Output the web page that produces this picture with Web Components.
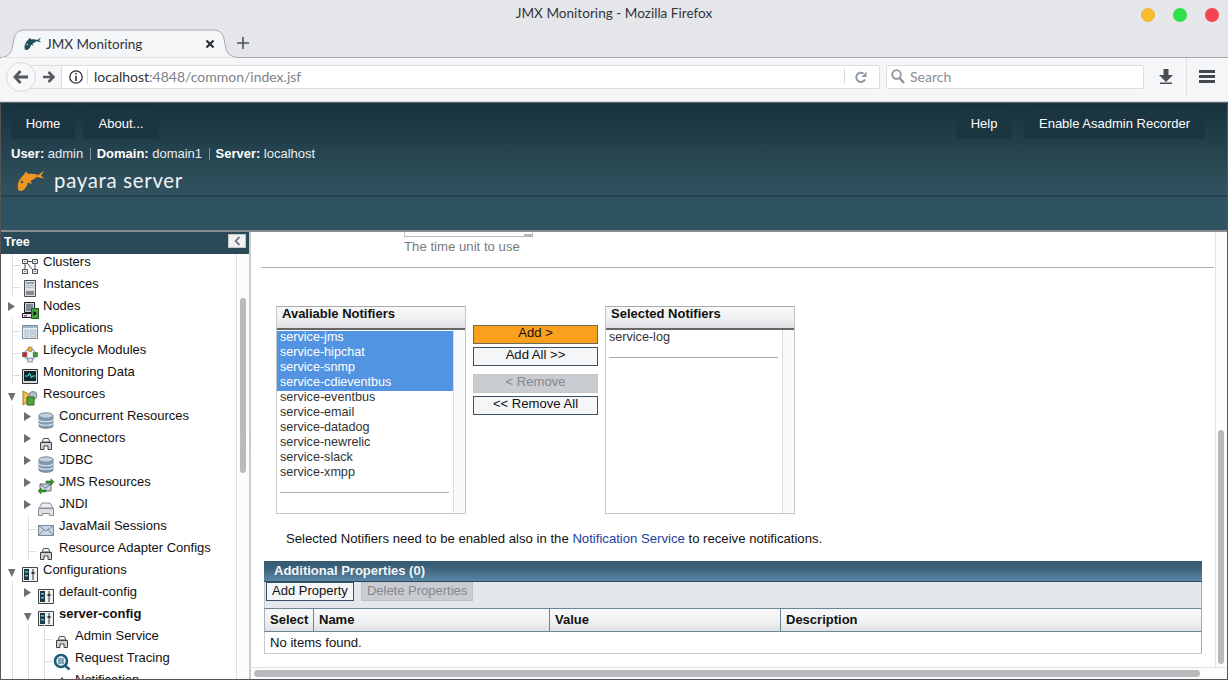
<!DOCTYPE html>
<html><head><meta charset="utf-8"><title>JMX Monitoring</title>
<style>
html,body{margin:0;padding:0;width:1228px;height:680px;overflow:hidden;background:#fff}
body{font-family:"Liberation Sans",Arial,sans-serif;font-size:13px;color:#111}
</style></head><body>
<firefox-chrome></firefox-chrome>
<payara-app>
  <admin-header slot="header"></admin-header>
  <tree-panel slot="tree">
    <tree-node first level="1" icon="clusters" guides="11" label="Clusters"></tree-node>
    <tree-node level="1" icon="instance" guides="11" label="Instances"></tree-node>
    <tree-node level="1" icon="nodes" exp="r" label="Nodes"></tree-node>
    <tree-node level="1" icon="app" guides="11" label="Applications"></tree-node>
    <tree-node level="1" icon="lifecycle" guides="11" label="Lifecycle Modules"></tree-node>
    <tree-node level="1" icon="monitor" guides="11" label="Monitoring Data"></tree-node>
    <tree-node level="1" icon="resources" exp="d" label="Resources"></tree-node>
    <tree-node level="2" icon="db" exp="r" guides="11" label="Concurrent Resources"></tree-node>
    <tree-node level="2" icon="connector" exp="r" guides="11" label="Connectors"></tree-node>
    <tree-node level="2" icon="db" exp="r" guides="11" label="JDBC"></tree-node>
    <tree-node level="2" icon="jms" exp="r" guides="11" label="JMS Resources"></tree-node>
    <tree-node level="2" icon="jndi" exp="r" guides="11" label="JNDI"></tree-node>
    <tree-node level="2" icon="mail" guides="11,27" label="JavaMail Sessions"></tree-node>
    <tree-node level="2" icon="connector" guides="11,27" label="Resource Adapter Configs"></tree-node>
    <tree-node level="1" icon="config" exp="d" label="Configurations"></tree-node>
    <tree-node level="2" icon="config" exp="r" guides="11" label="default-config"></tree-node>
    <tree-node level="2" icon="config" exp="d" bold guides="11" label="server-config"></tree-node>
    <tree-node level="3" icon="connector" guides="11,27,43" label="Admin Service"></tree-node>
    <tree-node level="3" icon="tracing" guides="11,27,43" label="Request Tracing"></tree-node>
    <tree-node level="3" icon="notify" guides="11,27,43" label="Notification"></tree-node>
  </tree-panel>
  <main-panel slot="main">
    <notifier-picker></notifier-picker>
    <p class="note">Selected Notifiers need to be enabled also in the <a>Notification Service</a> to receive notifications.</p>
    <props-table></props-table>
  </main-panel>
</payara-app>
<script>
const FISH='M1.500 20.500C.5 17 .5 13 2.500 10C4 7 7 5 9 1.500L11.500 4C15 3.500 18 4 21 5L27 .8L24 5.800L27.500 8.500L19.700 7C18 8.500 16 10 13.500 10.800L15 14L11 12.500C10.500 16 8 19.500 5 21Z';
class FirefoxChrome extends HTMLElement{constructor(){super();this.attachShadow({mode:'open'}).innerHTML=`<style>
:host{display:block;height:102px;background:#e5e6ea;font-family:Lato,"Open Sans",sans-serif;color:#2f3338}
.title{height:29px;box-sizing:border-box;display:flex;align-items:center;justify-content:center;padding-bottom:4px;font-size:13.6px;position:relative;color:#32363b}
.lights{position:absolute;right:0;top:0;height:29px;display:flex;gap:18px;padding:0 9px 0 0;align-items:center;box-sizing:border-box}
.lights i{width:14px;height:14px;border-radius:50%;display:block}
.tabs{height:29px;box-sizing:border-box;border-bottom:1px solid #a9aaad;display:flex;align-items:flex-end;padding-left:14px;position:relative}
.tab{width:212px;height:29px;margin-bottom:-1px;position:relative;display:flex;align-items:center;font-size:13.5px;z-index:1}
.tab svg.bg{position:absolute;left:-14px;top:0;width:240px;height:29px}
.tab span,.tab svg.fav,.tab .x{position:relative}
.tab svg.fav{margin-left:10px;width:17px;height:17px;flex:none}
.tab span{margin-left:5px;flex:1}
.tab .x{margin-right:11px;width:10px;height:10px}
.plus{margin:0 0 0 11px;align-self:center;width:12px;height:12px}
.nav{height:44px;box-sizing:border-box;background:#f5f6f8;border-bottom:1px solid #d5d6da;display:flex;align-items:center;padding:0 0 6px 0;position:relative;margin-bottom:-1px}
.back{width:30px;height:30px;margin-left:6px;border-radius:50%;background:#f7f8f9;border:1px solid #d9dade;box-sizing:border-box;display:flex;align-items:center;justify-content:center;position:relative;z-index:1;flex:none}
.url{margin-left:-6px;width:850px;height:24px;box-sizing:border-box;border:1px solid #dcdde1;background:#fff;border-radius:0 2px 2px 0;display:flex;align-items:center;font-size:14px;color:#7e8287;flex:none}
.fwd{width:31px;height:22px;background:#f5f6f8;border-right:1px solid #dcdde1;display:flex;align-items:center;justify-content:flex-end;padding-right:6px;box-sizing:border-box;flex:none;margin-right:7px}
.info{width:14px;height:14px;flex:none}
.bar{width:1px;height:15px;background:#d6d7da;flex:none;margin:0 6px 0 4px}
.url b{font-weight:400;color:#2f3338}
.grow{flex:1}
.search{margin-left:6px;width:258px;height:24px;box-sizing:border-box;border:1px solid #dcdde1;background:#fff;border-radius:2px;display:flex;align-items:center;font-size:14px;color:#8a8d92;flex:none;padding:0 0 1px 4px;gap:5px}
.dl{margin-left:15px;width:14px;height:15px;flex:none}
.sep{width:1px;height:38px;background:#e0e1e4;margin-left:13px;flex:none}
.menu{margin-left:12px;width:16px;height:13px;flex:none}
</style>
<div class="title">JMX Monitoring - Mozilla Firefox
  <div class="lights"><i style="background:#fbbf2e;border:1px solid #eeb035;box-sizing:border-box"></i><i style="background:#2fe04a"></i><i style="background:#f5434f"></i></div></div>
<div class="tabs"><div class="tab">
  <svg class="bg" viewBox="0 0 240 29"><path d="M0 28.500C6 28.500 10 26 12 20L14 10C15 4 19 1 25 1H213C219 1 223 4 224 10L226 20C228 26 232 28 238 28.500Z" fill="#f5f6f8" stroke="#a9aaad"/><path d="M2 29H236" stroke="#f5f6f8" stroke-width="1.500"/></svg>
  <svg class="fav" viewBox="0 0 27 21"><path d="${FISH}" fill="#1f4f5e"/><circle cx="5" cy="12" r="1.200" fill="#f5f6f8"/></svg>
  <span>JMX Monitoring</span>
  <svg class="x" viewBox="0 0 10 10"><path d="M1.500 1.500L8.500 8.500M8.500 1.500L1.500 8.500" stroke="#2d3136" stroke-width="2.200"/></svg>
  </div>
  <svg class="plus" viewBox="0 0 12 12"><path d="M6 0V12M0 6H12" stroke="#4d5156" stroke-width="1.600"/></svg>
</div>
<div class="nav">
  <div class="back"><svg width="16" height="14" viewBox="0 0 16 14"><path d="M7.500 1L2 7L7.500 13M2.500 7H15" fill="none" stroke="#55595e" stroke-width="2.800"/></svg></div>
  <div class="url">
    <div class="fwd"><svg width="13" height="12" viewBox="0 0 13 12"><path d="M6.500 1L11.500 6L6.500 11M11 6H1" fill="none" stroke="#55595e" stroke-width="2.600"/></svg></div>
    <svg class="info" viewBox="0 0 14 14"><circle cx="7" cy="7" r="6.200" fill="none" stroke="#2b2f33" stroke-width="1.300"/><path d="M6.200 3h1.600v1.600H6.200zM6.200 5.800h1.600V11H6.200z" fill="#2b2f33"/></svg>
    <i class="bar"></i>
    <div class="grow"><b>localhost</b>:4848/common/index.jsf</div>
    <i class="bar" style="margin:0 10px 0 0"></i>
    <svg width="12" height="12" viewBox="0 0 12 12" style="margin-right:12px;flex:none"><path d="M10 8.500A4.600 4.600 0 1 1 8.500 2.500" fill="none" stroke="#8f9aa8" stroke-width="2"/><path d="M11.500 .5V6H6.500Z" fill="#8f9aa8"/></svg>
  </div>
  <div class="search"><svg width="14" height="15" viewBox="0 0 14 15" style="flex:none"><circle cx="5.500" cy="5.500" r="4.300" fill="none" stroke="#8e9196" stroke-width="1.700"/><path d="M8.500 9L13 14" stroke="#8e9196" stroke-width="2.300"/></svg>Search</div>
  <svg class="dl" viewBox="0 0 14 15"><path d="M4.500 0H9.500V6H14L7 13L0 6H4.500ZM1 13.500H13V15H1Z" fill="#4a4d52"/></svg>
  <i class="sep"></i>
  <svg class="menu" viewBox="0 0 16 13"><path d="M0 0H16V3H0ZM0 5H16V8H0ZM0 10H16V13H0Z" fill="#45484d"/></svg>
</div>`}}
customElements.define('firefox-chrome',FirefoxChrome);

class PayaraApp extends HTMLElement{constructor(){super();this.attachShadow({mode:'open'}).innerHTML=`<style>
:host{display:flex;flex-direction:column;height:578px;box-sizing:border-box;border-top:1px solid #5f6366;border-left:1px solid #555;border-right:1px solid #555;border-bottom:1px solid #555;overflow:hidden}
.split{display:flex;flex:1;min-height:0;border-top:2px solid #8b8e91}
</style><slot name="header"></slot><div class="split"><slot name="tree"></slot><slot name="main"></slot></div>`}}
customElements.define('payara-app',PayaraApp);

class DarkButton extends HTMLElement{constructor(){super();this.attachShadow({mode:'open'}).innerHTML=`<style>
:host{display:block;height:28px;line-height:25px;background:#1b3641;border-radius:2px;color:#fff;font-size:13px;text-align:center;box-sizing:border-box}
</style><slot></slot>`}}
customElements.define('dark-button',DarkButton);

class AdminHeader extends HTMLElement{constructor(){super();this.attachShadow({mode:'open'}).innerHTML=`<style>
:host{display:block;height:127px;flex:none;box-sizing:border-box;background:linear-gradient(#17323e,#31535f 92px,#1c3c49 92px,#1c3c49 93px,#2f5260 94px);color:#fff;font-size:13px;overflow:hidden}
.nav{display:flex;padding:8px 22px 0 10px;gap:8px}
.grow{flex:1}
.who{padding:6px 0 0 10px;height:17px;line-height:17px;display:flex;color:#e8edef}
.who b{margin-right:3.500px;color:#fff}
.who i{display:inline-block;width:1px;height:12px;background:#7d99a6;margin:3px 6px 0 6.500px}
.logo{display:flex;align-items:center;padding:0 0 0 16px;margin-top:4px;height:29px}
.logo span{font:400 20.4px/29px Lato,"Open Sans",sans-serif;margin-left:10px;color:#f0f3f4;letter-spacing:.7px}
</style>
<div class="nav"><dark-button style="width:64px">Home</dark-button><dark-button style="width:76px">About...</dark-button><div class="grow"></div><dark-button style="width:56px;margin-right:4px">Help</dark-button><dark-button style="width:181px">Enable Asadmin Recorder</dark-button></div>
<div class="who"><b>User:</b>admin<i></i><b>Domain:</b>domain1<i></i><b>Server:</b>localhost</div>
<div class="logo"><svg width="27" height="21" viewBox="0 0 27 21"><path d="${FISH}" fill="#ee9420"/><circle cx="5" cy="12" r="1.200" fill="#2f5260"/></svg><span>payara server</span></div>`}}
customElements.define('admin-header',AdminHeader);

class TreePanel extends HTMLElement{constructor(){super();this.attachShadow({mode:'open'}).innerHTML=`<style>
:host{display:flex;flex-direction:column;width:250px;flex:none;box-sizing:border-box;background:#fff;overflow:hidden;border-right:2px solid #c9cbce}
.head{height:22px;flex:none;background:#2a4a57;color:#fff;font:700 12.5px/20px "Liberation Sans",Arial,sans-serif;padding:0 3px 0 3px;display:flex;justify-content:space-between}
.btn{width:18px;height:14px;margin-top:2px;background:#f0f1f3;border:1px solid #c5c7ca;box-sizing:border-box;display:flex;align-items:center;justify-content:center}
.body{flex:1;min-height:0;display:flex;overflow:hidden}
.rows{flex:1;min-width:0;overflow:hidden;border-right:1px solid #dfe0e3}
.gutter{width:12px;flex:none;background:#fcfcfd;position:relative}
.thumb{position:absolute;left:3px;top:44px;width:6px;height:175px;border-radius:3px;background:#b8babe}
.grip{position:absolute;left:8px;top:179px;width:3px;height:17px;border:1px solid #b5b7ba;border-width:0 1px;background:#fff}
</style>
<div class="head">Tree<div class="btn"><svg width="7" height="10" viewBox="0 0 7 10"><path d="M5.500 1L1.500 5L5.500 9" fill="none" stroke="#777a7e" stroke-width="1.800"/></svg></div></div>
<div class="body"><div class="rows"><slot></slot></div><div class="gutter"><div class="thumb"></div><div class="grip"></div></div></div>`}}
customElements.define('tree-panel',TreePanel);

const ICONS={
clusters:'<path d="M.5 1.500h5v4h-5zM10.500 1.500h5v4h-5zM.5 11.500h5v4h-5zM10.500 11.500h5v4h-5z" fill="#eef1f4" stroke="#4a4f55"/><path d="M2 3h2v1H2zM12 3h2v1h-2zM2 13h2v1H2zM12 13h2v1h-2z" fill="#8a97a3"/><path d="M5.500 3.500h5M3 5.500v6M13 5.500v6M5.500 5.500l5 6" stroke="#4a4f55" fill="none"/>',
instance:'<path d="M2.500 .5h11v16h-11z" fill="#dde0e3" stroke="#4a4f55"/><path d="M4 2h8v2H4z" fill="#9aa3ab"/><path d="M4 5h8v1H4zM4 7h8v1H4z" fill="#b5bcc3"/><path d="M4 11h8v4H4z" fill="#6c7076"/><path d="M5 11v4M7 11v4M9 11v4M11 11v4" stroke="#c4c7ca" stroke-width=".6"/>',
nodes:'<path d="M2.500 .5h10v10h-10z" fill="#cfd3d8" stroke="#1c1c1c"/><path d="M4 2h7v7H4z" fill="#7b8a98"/><path d="M.5 11.500h10v4H.5z" fill="#e5e5ee" stroke="#1c1c1c"/><path d="M2 13h3v1.500H2z" fill="#a04aa0"/><path d="M9.500 6.500h7v10h-7z" fill="#46a245" stroke="#1f5a1e"/><path d="M11.500 9l3.500 2.500-3.500 2.500z" fill="#111"/>',
app:'<path d="M.5 1.500h15v13H.5z" fill="#eaeff4" stroke="#7d8c9a"/><path d="M1 2h14v2H1z" fill="#a5b6c6"/><path d="M3 6h3v7H3zM8 6h6v2.500H8zM8 10h6v3H8z" fill="#d5dee6" stroke="#92a4b4" stroke-width=".6"/>',
lifecycle:'<circle cx="8" cy="8.500" r="5.500" fill="none" stroke="#7f9fb8" stroke-width="1.200"/><rect x="5.800" y="1" width="4.400" height="4.400" rx="1" fill="#f0b020" stroke="#777" stroke-width=".6"/><rect x="0.500" y="6.500" width="4.400" height="4.400" fill="#d81c1c" stroke="#666" stroke-width=".6"/><rect x="11.100" y="6.500" width="4.400" height="4.400" fill="#22a030" stroke="#666" stroke-width=".6"/><rect x="5.800" y="12" width="4.400" height="4" fill="#d8e6f2" stroke="#567" stroke-width=".7"/>',
monitor:'<path d="M.5 1.500h15v14H.5z" fill="#d8dadd" stroke="#333"/><path d="M2 3h12v10H2z" fill="#0d2a33"/><path d="M3 8h3l1.500-3 2 5 1-2h3" fill="none" stroke="#4de0d0"/>',
resources:'<path d="M1 1l7 4v5l-7 5z" fill="#f2c14d" stroke="#a67a1a"/><circle cx="11" cy="5.500" r="4" fill="#aebdcc" stroke="#7a8a99"/><path d="M5 7h7v8H5z" fill="#54a43a" stroke="#2e6a1e"/>',
db:'<path d="M1 3.500v10.500c0 3 14 3 14 0V3.500z" fill="#7f99ae" stroke="#7b8d9c"/><ellipse cx="8" cy="3.500" rx="7" ry="2.700" fill="#c4d0da" stroke="#7b8d9c"/><path d="M1 7.500c0 3 14 3 14 0M1 11c0 3 14 3 14 0" fill="none" stroke="#dfe6ec" stroke-width="1.200"/>',
connector:'<path d="M5.500 4.500h5l1.500 3.500H4z" fill="#f0f2f4" stroke="#4f5459"/><path d="M2.500 8.500h11v7h-3.500v-3.500H6v3.500H2.500z" fill="#cfd3d7" stroke="#3f4347"/>',
jms:'<path d="M2 6h11v7H2z" fill="#c8d6e6" stroke="#667"/><path d="M2 6l5.500 4L13 6" fill="none" stroke="#667"/><path d="M8 3h5V.8L16 4l-3 3V5H8zM8 12H3v-2L0 13l3 3v-2h5z" fill="#2f9a20" stroke="#1a5a10" stroke-width=".5"/>',
jndi:'<path d="M4 3h8l3 5H1z" fill="#eceef1" stroke="#8a8f98"/><path d="M.5 8.500h15v7h-4v-2h-7v2h-4z" fill="#dde0e4" stroke="#8a8f98"/>',
mail:'<path d="M.5 3.500h15v10H.5z" fill="#c6d6e6" stroke="#7c8794"/><path d="M.5 3.500L8 9l7.500-5.500M.5 13.500L6 7.500M15.500 13.500L10 7.500" fill="none" stroke="#7c8794"/>',
config:'<path d="M.5 1.500h15v14H.5z" fill="#eef0f2" stroke="#444"/><path d="M2 3h5v11H2z" fill="#1e3a44"/><path d="M3 5h3v1.500H3z" fill="#3fd0c0"/><path d="M3 9h3v1.500H3z" fill="#8ad"/><path d="M11 3v11" stroke="#333"/><path d="M9.500 6h3v2h-3z" fill="#333"/>',
tracing:'<circle cx="7" cy="7" r="6" fill="#e8f0f4" stroke="#1d5f79" stroke-width="2.600"/><path d="M4 5h6M4 7h6M4 9h6" stroke="#1d5f79" stroke-width="1.100"/><path d="M11 11.500L15.500 15.500" stroke="#1d5f79" stroke-width="2.400"/>',
notify:'<path d="M8 1L9.500 3H6.500Z" fill="#1d5f79"/><path d="M4 4h8l1 8H3z" fill="#1d5f79"/>'
};
class TreeNode extends HTMLElement{constructor(){super();const a=k=>this.getAttribute(k);const lv=+a('level');const x=(lv-1)*16;
 const guides=(a('guides')||'').split(',').filter(Boolean);
 const branch=!a('exp');
 const lines=guides.map(g=>`<i class="v" style="left:${g}px"></i>`).join('');
 const hx=lv==1?11:lv==2?27:43;
 const tri=a('exp')=='r'?'<path d="M0 0L7 4.500L0 9Z"/>':a('exp')=='d'?'<path d="M0 3L7.500 3L3.750 11Z"/>':'';
 this.attachShadow({mode:'open'}).innerHTML=`<style>
:host{display:block;height:22px;position:relative;font-size:13px;line-height:22px;color:#111;white-space:nowrap}
:host([first]){margin-top:-3px}
.v{position:absolute;top:0;bottom:0;width:1px;background:#dfe0e2}
.h{position:absolute;top:14px;height:1px;width:9px;background:#dfe0e2;left:${hx}px}
.row{display:flex;padding-left:${7+x}px}
.tri{width:8px;flex:none;height:12px;margin-top:7px;fill:#6d6f72;margin-right:6px;position:relative;background:#fff}
.ic{width:16px;height:16px;margin-top:7px;flex:none;margin-right:5px;position:relative;overflow:visible}
.t{position:relative}
.b{font-weight:700}
</style>${lines}${branch?'<i class="h"></i>':''}<div class="row"><svg class="tri" viewBox="0 0 8 12" style="${a('exp')?'':'background:none'}">${tri}</svg><svg class="ic" viewBox="0 0 16 16">${ICONS[a('icon')]||''}</svg><span class="t ${this.hasAttribute('bold')?'b':''}">${a('label')}</span></div>`}}
customElements.define('tree-node',TreeNode);

class MainPanel extends HTMLElement{constructor(){super();this.attachShadow({mode:'open'}).innerHTML=`<style>
:host{display:flex;flex-direction:column;flex:1;min-width:0;background:#fff;overflow:hidden}
.top{flex:1;min-height:0;display:flex;overflow:hidden}
.content{flex:1;min-width:0;border-right:1px solid #e0e1e4;overflow:hidden;padding-left:10px;font-size:13px}
.vs{width:11px;flex:none;background:#fcfcfd;position:relative}
.vs i{position:absolute;left:2px;top:198px;width:6px;height:234px;border-radius:3px;background:#b8babe}
.box{margin-left:143px;width:129px;height:5px;border:1px solid #c8cacd;border-top:0;position:relative;box-sizing:border-box;border-bottom:1px solid #bbb}
.box::after{content:"";position:absolute;right:-1px;bottom:-1px;width:9px;height:3px;background:#b3b5b8}
.hint{margin:1px 0 0 143px;color:#777b80;line-height:18px;height:18px;font-size:13.2px}
hr{margin:11px 0 0 0;border:0;height:1px;background:#a5aeb3;width:953px}
::slotted(.note){margin:16px 0 0 25px;font-size:13.15px;line-height:18px;color:#111;height:18px}
.hs{height:12px;flex:none;background:#fcfcfd;border-top:1px solid #e0e1e4;box-sizing:border-box;padding:2px 0 0 3px}
.hs i{display:block;height:7px;width:946px;border-radius:4px;background:#b8babe}
</style>
<div class="top"><div class="content"><div class="box"></div><div class="hint">The time unit to use</div><hr><slot></slot></div><div class="vs"><i></i></div></div>
<div class="hs"><i></i></div>`}}
customElements.define('main-panel',MainPanel);

class ListBox extends HTMLElement{constructor(){super();const items=(this.getAttribute('items')||'').split(',').filter(Boolean);const sel=+(this.getAttribute('sel')||0);
 this.attachShadow({mode:'open'}).innerHTML=`<style>
:host{display:block;width:190px;height:208px;box-sizing:border-box;border:1px solid #c5c7ca;border-top-color:#a9abae;font-size:12.6px;color:#333}
.h{height:23px;box-sizing:border-box;background:linear-gradient(#f8f8f9,#f2f3f4 45%,#dfe0e3);border-bottom:2px solid #666;font-weight:700;color:#111;padding-left:5px;line-height:13px;padding-top:0;font-size:13px}
.b{display:flex;height:183px}
.l{flex:none;width:177px;border-right:1px solid #dcdde1;box-sizing:border-box;padding-top:1px}
.r{flex:1;background:#fafafb}
.i{height:15px;line-height:13px;padding-left:3px}
.s{background:#5294e2;color:#fff}
.sep{height:1px;background:#a9abae;margin:var(--m) 4px 0 3px}
</style><div class="h">${this.getAttribute('title')}</div><div class="b"><div class="l" style="--m:${this.getAttribute('gap')}px">${items.map((t,i)=>`<div class="i ${i<sel?'s':''}">${t}</div>`).join('')}<div class="sep"></div></div><div class="r"></div></div>`}}
customElements.define('list-box',ListBox);

class ActionButton extends HTMLElement{constructor(){super();this.attachShadow({mode:'open'}).innerHTML=`<style>
:host{display:block;height:19px;box-sizing:border-box;border:1px solid #3a4f68;background:#f4f6f8;color:#111;text-align:center;font-size:13.1px;line-height:14px;overflow:hidden}
:host([primary]){background:#fb9f1e;border-color:#6a6a55}
:host([off]){background:#c9ccd1;border-color:#c2c5c9;color:#85888c}
</style><slot></slot>`}}
customElements.define('action-button',ActionButton);

class NotifierPicker extends HTMLElement{constructor(){super();this.attachShadow({mode:'open'}).innerHTML=`<style>
:host{display:flex;margin:38px 0 0 15px;height:208px}
.btns{width:125px;margin:19px 7px 0 7px;display:flex;flex-direction:column;gap:3px}
.gap{height:2px}
</style>
<list-box title="Avaliable Notifiers" sel="4" gap="11" items="service-jms,service-hipchat,service-snmp,service-cdieventbus,service-eventbus,service-email,service-datadog,service-newrelic,service-slack,service-xmpp"></list-box>
<div class="btns"><action-button primary>Add &gt;</action-button><action-button>Add All &gt;&gt;</action-button><div class="gap"></div><action-button off>&lt; Remove</action-button><action-button>&lt;&lt; Remove All</action-button></div>
<list-box title="Selected Notifiers" gap="11" items="service-log"></list-box>`}}
customElements.define('notifier-picker',NotifierPicker);

class PropsTable extends HTMLElement{constructor(){super();this.attachShadow({mode:'open'}).innerHTML=`<style>
:host{display:block;margin:13px 0 0 3px;width:938px;font-size:13px;color:#111}
.cap{height:21px;box-sizing:border-box;background:linear-gradient(#345a70,#3a6078 30%,#5a86a6);border-bottom:1px solid #2b4a62;color:#f2f5f7;font-weight:700;padding-left:10px;line-height:20px}
.tools{height:26px;box-sizing:border-box;background:#e4e7ec;border-right:1px solid #a9abae;border-left:1px solid #c5c7ca;display:flex;gap:7px;padding-left:1px}
.tools div{height:19px;line-height:16px;box-sizing:border-box;padding:0 5px;border:1px solid #3a4f68;background:#f4f6f8}
.tools .off{background:#c9ccd1;border-color:#bdc0c4;color:#85888c}
.hd{display:grid;grid-template-columns:49px 236px 231px 1fr;height:24px;box-sizing:border-box;border:solid #6d8492;border-width:1px 1px 1px 1px;border-right-color:#a9abae;border-left-color:#a9b5bd;background:linear-gradient(#f8f8f9,#f2f3f4 50%,#dfe0e3)}
.hd div{font-weight:700;padding-left:5px;line-height:21px;border-right:1px solid #6d8492}
.hd div:last-child{border:0}
.row{height:22px;box-sizing:border-box;border:1px solid #c8cacd;border-top:0;border-right-color:#a9abae;padding-left:5px;line-height:21px;font-size:13.1px}
</style>
<div class="cap">Additional Properties (0)</div>
<div class="tools"><div>Add Property</div><div class="off">Delete Properties</div></div>
<div class="hd"><div>Select</div><div>Name</div><div>Value</div><div>Description</div></div>
<div class="row">No items found.</div>`}}
customElements.define('props-table',PropsTable);
</script>
<style>
.note a{color:#1a3fa0;text-decoration:none}
</style>
</body></html>
